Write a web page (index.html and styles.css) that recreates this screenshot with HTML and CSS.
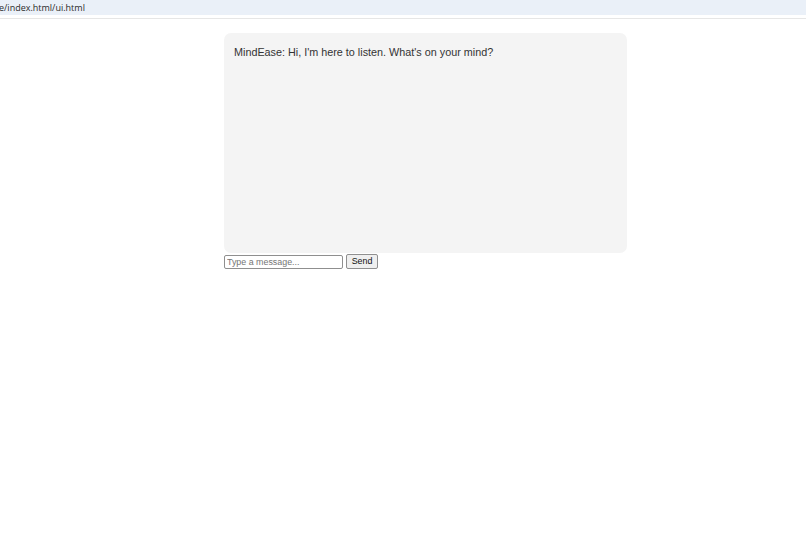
FILE: index.html
```html
<!DOCTYPE html>
<html lang="en">
<head>
<meta charset="utf-8">
<title>MindEase</title>
<link rel="stylesheet" href="styles.css">
</head>
<body>
<div class="urlbar"><span class="url">e/index.html/ui.html</span></div>
<div class="divider"></div>
<main class="page">
  <div class="chat">
    <div class="chat-box">
      <p class="msg">MindEase: Hi, I'm here to listen. What's on your mind?</p>
    </div>
    <div class="composer">
      <input class="msg-input" type="text" placeholder="Type a message...">
      <button class="send-btn" type="button">Send</button>
    </div>
  </div>
</main>
</body>
</html>
```
FILE: styles.css
```css
html, body {
  margin: 0;
  padding: 0;
  background: #ffffff;
}
body {
  font-family: "Liberation Sans", Arial, sans-serif;
  width: 806px;
  height: 537px;
  overflow: hidden;
}
.urlbar {
  height: 15px;
  background: #eaf0f8;
  display: flex;
  align-items: center;
}
.url {
  font-family: "Open Sans", "Noto Sans", sans-serif;
  font-size: 9px;
  color: #2b2b2b;
  line-height: 15px;
  margin-left: -1px;
}
.divider {
  height: 1px;
  margin-top: 3px;
  background: #e6e6e6;
}
.page {
  padding-top: 14px;
  padding-left: 224px;
}
.chat {
  width: 403px;
}
.chat-box {
  box-sizing: border-box;
  height: 220px;
  background: #f4f4f4;
  border-radius: 7px;
  padding: 11px 10px 10px;
}
.msg {
  margin: 0;
  font-size: 10.8px;
  line-height: 16px;
  color: #333333;
}
.composer {
  display: flex;
  align-items: center;
  gap: 3px;
  margin-top: 1px;
}
.msg-input {
  box-sizing: border-box;
  width: 119px;
  height: 14px;
  margin: 0;
  padding: 0 2px;
  border: 1px solid #8f8f8f;
  border-radius: 2px;
  font-family: "Liberation Sans", Arial, sans-serif;
  font-size: 8.9px;
  color: #222;
  background: #fff;
}
.msg-input::placeholder {
  color: #757575;
}
.send-btn {
  box-sizing: border-box;
  width: 32px;
  height: 15px;
  margin: 0;
  padding: 0;
  border: 1px solid #8f8f8f;
  border-radius: 2px;
  background: #efefef;
  font-family: "Liberation Sans", Arial, sans-serif;
  font-size: 8.9px;
  color: #111;
  line-height: 13px;
}
```
